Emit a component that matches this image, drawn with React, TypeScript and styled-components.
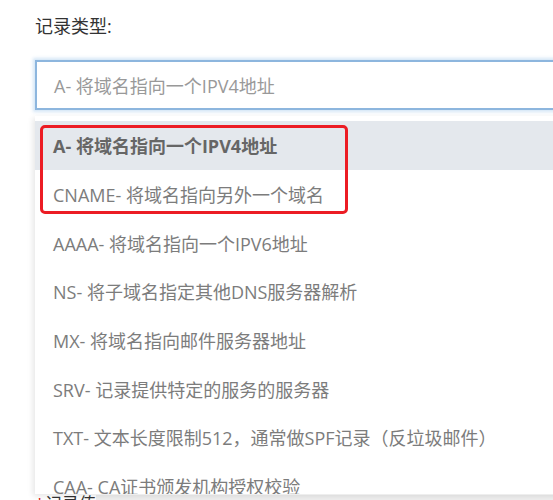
import styled, { createGlobalStyle } from "styled-components"

const GlobalStyle = createGlobalStyle`
	html, body {
		margin: 0;
		padding: 0;
		background: #ffffff;
		overflow: hidden;
	}
	body {
		font-family: "Open Sans", "Noto Sans CJK SC", sans-serif;
	}
`

const StyledPage = styled.div`
	width: 553px;
	height: 500px;
	overflow: hidden;
	padding: 14px 0 0 35px;
	box-sizing: border-box;
`

const StyledLabel = styled.div`
	font-size: 18px;
	line-height: 24px;
	color: #333333;
`

const StyledInput = styled.div`
	margin-top: 22px;
	width: 560px;
	height: 50px;
	box-sizing: border-box;
	border: 2px solid #8db6de;
	box-shadow: 0 0 3px 2px rgba(160, 200, 235, 0.45);
	display: flex;
	align-items: center;
	padding-left: 17px;
	font-size: 18px;
	color: #999999;
`

const StyledDropdown = styled.div`
	position: relative;
	margin-top: 6px;
	width: 560px;
	height: 378px;
	overflow: hidden;
	background: #ffffff;
	box-shadow: -2px 2px 6px rgba(0, 0, 0, 0.1);
	padding-top: 5px;
	box-sizing: border-box;
`

const StyledOption = styled.div<{ $active?: boolean }>`
	height: 48.7px;
	display: flex;
	align-items: center;
	padding-left: 18px;
	font-size: 18px;
	color: ${(p) => (p.$active ? "#666666" : "#7c7c7c")};
	font-weight: ${(p) => (p.$active ? 700 : 400)};
	background: ${(p) => (p.$active ? "#e4e8ed" : "transparent")};
`

const StyledHighlight = styled.div`
	position: absolute;
	left: 5px;
	top: 9px;
	width: 308px;
	height: 89px;
	box-sizing: border-box;
	border: 3px solid #ec1c24;
	border-radius: 5px;
	pointer-events: none;
`

const StyledNextRow = styled.div`
	display: flex;
	align-items: flex-start;
	height: 20px;
	font-size: 17px;
	line-height: 20px;
	color: #333333;

	.star {
		color: #e02020;
		width: 10px;
	}

	.bar {
		flex: 1;
		height: 6px;
		margin-top: 1px;
		background: #eeeeee;
	}
`

const options = [
	"A- 将域名指向一个IPV4地址",
	"CNAME- 将域名指向另外一个域名",
	"AAAA- 将域名指向一个IPV6地址",
	"NS- 将子域名指定其他DNS服务器解析",
	"MX- 将域名指向邮件服务器地址",
	"SRV- 记录提供特定的服务的服务器",
	"TXT- 文本长度限制512，通常做SPF记录（反垃圾邮件）",
	"CAA- CA证书颁发机构授权校验",
]

function App() {
	return (
		<StyledPage>
			<GlobalStyle />
			<StyledLabel>记录类型:</StyledLabel>
			<StyledInput>A- 将域名指向一个IPV4地址</StyledInput>
			<StyledDropdown>
				{options.map((item, index) => (
					<StyledOption key={index} $active={index === 0}>
						{item}
					</StyledOption>
				))}
				<StyledHighlight />
			</StyledDropdown>
			<StyledNextRow>
				<span className="star">*</span>
				<span>记录值</span>
				<div className="bar" />
			</StyledNextRow>
		</StyledPage>
	)
}

export default App
